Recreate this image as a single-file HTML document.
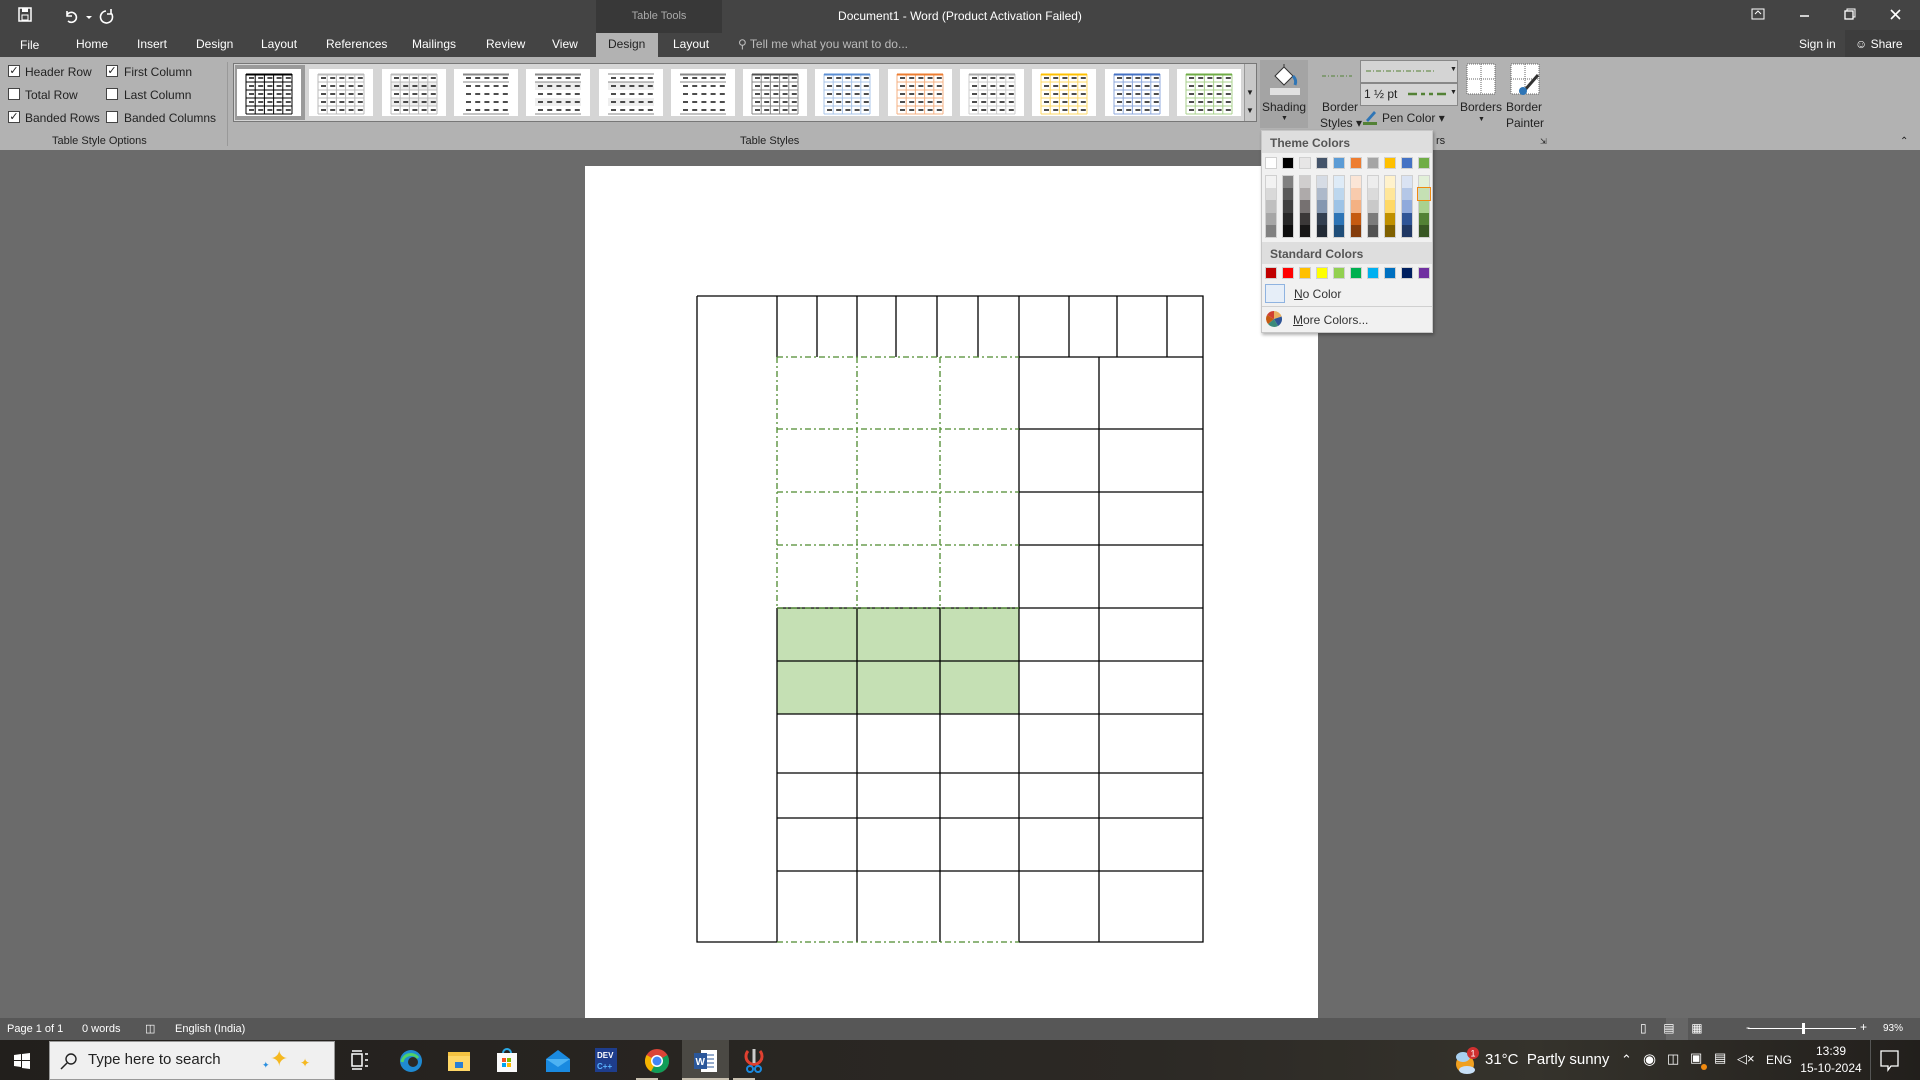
<!DOCTYPE html>
<html><head><meta charset="utf-8">
<style>
*{margin:0;padding:0;box-sizing:border-box}
body{width:1920px;height:1080px;overflow:hidden;position:relative;background:#6b6b6b;font-family:"Liberation Sans",sans-serif;font-size:12px;color:#222}
.a{position:absolute}
.w{color:#fff}
.t{position:absolute;white-space:nowrap}
.cb{position:absolute;width:12px;height:12px;border:1px solid #444;background:#fff;font-size:11px;line-height:10px;text-align:center;color:#222}
.sw{position:absolute;width:12px;height:12px;border:1px solid #d0d0d0}
</style></head><body>
<div class="a" style="left:0;top:0;width:1920px;height:57px;background:#444"></div>
<div class="a" style="left:596px;top:0;width:126px;height:33px;background:#383838"></div>
<div class="t" style="left:596px;top:10px;width:126px;text-align:center;color:#aaa;font-size:11px">Table Tools</div>
<div class="a" style="left:596px;top:33px;width:62px;height:24px;background:#b2b2b2"></div>
<div class="t w" style="left:760px;top:9px;width:400px;text-align:center;font-size:12px">Document1 - Word (Product Activation Failed)</div>
<svg class="a" style="left:18px;top:6px" width="150" height="20"><rect x="1" y="2" width="12" height="13" fill="none" stroke="#fff" stroke-width="1.5"/><rect x="4" y="2" width="6" height="4" fill="#fff"/><rect x="4" y="9" width="6" height="5" fill="none" stroke="#fff"/>
<path d="M49 9 a5 5 0 1 1 1 6 M49 5 v5 h5" fill="none" stroke="#fff" stroke-width="1.6"/><path d="M68 10 l3 3 l3-3z" fill="#fff"/>
<path d="M88 5 a6 6 0 1 0 5 2 M93 3 v5 h-4" fill="none" stroke="#fff" stroke-width="1.6"/><path d="M159 10 l3 3 l3-3z M159 7 h6" fill="#fff" stroke="#fff" transform="translate(-2,0)"/></svg>
<div class="t w" style="left:20px;top:38px">File</div>
<div class="t w" style="left:76px;top:37px">Home</div>
<div class="t w" style="left:137px;top:37px">Insert</div>
<div class="t w" style="left:196px;top:37px">Design</div>
<div class="t w" style="left:261px;top:37px">Layout</div>
<div class="t w" style="left:326px;top:37px">References</div>
<div class="t w" style="left:412px;top:37px">Mailings</div>
<div class="t w" style="left:486px;top:37px">Review</div>
<div class="t w" style="left:552px;top:37px">View</div>
<div class="t" style="left:608px;top:37px;color:#222">Design</div>
<div class="t w" style="left:673px;top:37px">Layout</div>
<div class="t" style="left:738px;top:37px;color:#bbb">&#9906; Tell me what you want to do...</div>
<div class="t w" style="left:1799px;top:37px">Sign in</div>
<div class="a" style="left:1845px;top:30px;width:75px;height:27px;background:#3d3d3d"></div>
<div class="t w" style="left:1855px;top:37px">&#9786; Share</div>
<svg class="a" style="left:1748px;top:6px" width="170" height="20"><rect x="4" y="3" width="12" height="10" fill="none" stroke="#fff"/><path d="M7 8 l3-3 l3 3" stroke="#fff" fill="none"/><path d="M52 10 h9" stroke="#fff" stroke-width="1.5"/><rect x="97" y="5" width="8" height="8" fill="none" stroke="#fff" stroke-width="1.3"/><path d="M99 5 v-2 h8 v8 h-2" stroke="#fff" fill="none"/><path d="M143 4 l9 9 M152 4 l-9 9" stroke="#fff" stroke-width="1.6"/></svg>

<div class="a" style="left:0;top:57px;width:1920px;height:93px;background:#b2b2b2"></div>
<div class="cb" style="left:8px;top:65px">&#10003;</div><div class="t" style="left:25px;top:65px">Header Row</div>
<div class="cb" style="left:8px;top:88px"></div><div class="t" style="left:25px;top:88px">Total Row</div>
<div class="cb" style="left:8px;top:111px">&#10003;</div><div class="t" style="left:25px;top:111px">Banded Rows</div>
<div class="cb" style="left:106px;top:65px">&#10003;</div><div class="t" style="left:124px;top:65px">First Column</div>
<div class="cb" style="left:106px;top:88px"></div><div class="t" style="left:124px;top:88px">Last Column</div>
<div class="cb" style="left:106px;top:111px"></div><div class="t" style="left:124px;top:111px">Banded Columns</div>
<div class="t" style="left:52px;top:135px;font-size:11px">Table Style Options</div>
<div class="a" style="left:227px;top:62px;width:1px;height:84px;background:#999"></div>
<div class="t" style="left:740px;top:135px;font-size:11px">Table Styles</div>
<div class="a" style="left:233px;top:63px;width:1024px;height:59px;background:#d5d5d5;border:1px solid #777"></div>
<div class="a" style="left:235px;top:65px;width:70px;height:55px;background:#9a9a9a"></div>
<div id="gal"></div>
<div class="a" style="left:1244px;top:64px;width:12px;height:57px;background:#c8c8c8;border-left:1px solid #999"></div>
<div class="t" style="left:1246px;top:88px;font-size:8px">&#9660;</div><div class="t" style="left:1246px;top:106px;font-size:8px">&#9660;</div>
<div class="a" style="left:1260px;top:60px;width:48px;height:68px;background:#a4a4a4"></div>
<svg class="a" style="left:1270px;top:62px" width="30" height="34"><path d="M5 14 l9-9 l9 9 l-9 9z" fill="#fff" stroke="#333"/><path d="M14 5 v-3" stroke="#333"/><path d="M23 14 q4 4 2 9" stroke="#2e75b6" stroke-width="3" fill="none"/><rect x="0" y="26" width="30" height="7" fill="#e0e0e0"/></svg>
<div class="t" style="left:1262px;top:100px">Shading</div><div class="t" style="left:1281px;top:115px;font-size:7px">&#9660;</div>
<svg class="a" style="left:1322px;top:74px" width="30" height="4"><path d="M0 2h30" stroke="#538135" stroke-dasharray="4 2 1 2"/></svg>
<div class="t" style="left:1322px;top:100px;text-align:center">Border</div><div class="t" style="left:1320px;top:116px">Styles &#9662;</div>
<div class="a" style="left:1360px;top:60px;width:98px;height:23px;background:#d4d4d4;border:1px solid #888"></div>
<svg class="a" style="left:1366px;top:69px" width="80" height="4"><path d="M0 2h70" stroke="#538135" stroke-dasharray="5 2 1 2"/></svg>
<div class="t" style="left:1450px;top:66px;font-size:7px">&#9660;</div>
<div class="a" style="left:1360px;top:83px;width:98px;height:23px;background:#d4d4d4;border:1px solid #888"></div>
<div class="t" style="left:1364px;top:87px">1 &#189; pt</div>
<svg class="a" style="left:1408px;top:92px" width="40" height="4"><path d="M0 2h40" stroke="#538135" stroke-width="2.5" stroke-dasharray="9 4 4 4 4 4"/></svg>
<div class="t" style="left:1450px;top:89px;font-size:7px">&#9660;</div>
<svg class="a" style="left:1363px;top:108px" width="16" height="18"><path d="M3 12 l8-9 2 2 -8 9z" fill="#2e75b6"/><rect x="0" y="14" width="14" height="3" fill="#538135"/></svg>
<div class="t" style="left:1382px;top:111px">Pen Color &#9662;</div>
<svg class="a" style="left:1466px;top:63px" width="30" height="32"><rect x="1" y="1" width="28" height="30" fill="#fff" stroke="#666" stroke-dasharray="1 1"/><path d="M15 1v30M1 16h28" stroke="#666" stroke-dasharray="1 1"/></svg>
<div class="t" style="left:1460px;top:100px">Borders</div><div class="t" style="left:1478px;top:116px;font-size:7px">&#9660;</div>
<svg class="a" style="left:1510px;top:63px" width="32" height="34"><rect x="1" y="1" width="28" height="30" fill="#fff" stroke="#666" stroke-dasharray="1 1"/><path d="M15 1v30M1 16h28" stroke="#666" stroke-dasharray="1 1"/><path d="M14 28 l14-16" stroke="#333" stroke-width="3"/><circle cx="13" cy="28" r="4" fill="#2e75b6"/></svg>
<div class="t" style="left:1506px;top:100px">Border</div><div class="t" style="left:1506px;top:116px">Painter</div>
<div class="t" style="left:1436px;top:135px;font-size:11px">rs</div>
<div class="t" style="left:1540px;top:137px;font-size:8px">&#8690;</div>
<div class="t" style="left:1900px;top:136px;font-size:10px">&#8963;</div>

<div class="a" style="left:585px;top:166px;width:733px;height:852px;background:#fff"></div>
<svg class="a" style="left:0;top:0" width="1920" height="1080">
<rect x="777" y="608" width="242" height="106" fill="#c5e0b4"/>
<g stroke="#000" stroke-width="1.3" fill="none">
<path d="M697 296H1203V942H1019M777 942H697V296"/>
<path d="M777 296V357M817 296V357M857 296V357M896 296V357M937 296V357M978 296V357M1019 296V357M1069 296V357M1117 296V357M1167 296V357"/>
<path d="M1019 357H1203M1099 357V942M1019 429H1203M1019 492H1203M1019 545H1203"/>
<path d="M777 608H1203M777 661H1203M777 714H1203M777 773H1203M777 818H1203M777 871H1203"/>
<path d="M777 608V942M857 608V942M940 608V942M1019 357V942"/>
</g>
<g stroke="#4e8a2f" stroke-width="1.3" fill="none" stroke-dasharray="6 3 2 3">
<path d="M777 357H1019M777 429H1019M777 492H1019M777 545H1019M777 608H1019M777 942H1019"/>
<path d="M777 357V608M857 357V608M940 357V608"/>
</g>
</svg>

<div class="a" style="left:1261px;top:130px;width:172px;height:203px;background:#f1f1f1;border:1px solid #c6c6c6;box-shadow:1px 2px 3px rgba(0,0,0,.3)"></div>
<div class="a" style="left:1262px;top:131px;width:170px;height:22px;background:#dedede"></div>
<div class="t" style="left:1270px;top:136px;font-weight:bold;color:#555">Theme Colors</div>
<div class="a" style="left:1262px;top:242px;width:170px;height:22px;background:#dedede"></div>
<div class="t" style="left:1270px;top:247px;font-weight:bold;color:#555">Standard Colors</div>
<div id="sw"></div>
<div class="a" style="left:1265px;top:284px;width:20px;height:19px;background:#e6eef8;border:1px solid #8fb3e0"></div>
<div class="t" style="left:1294px;top:287px;color:#333"><u>N</u>o Color</div>
<div class="a" style="left:1262px;top:306px;width:170px;height:1px;background:#d0d0d0"></div>
<svg class="a" style="left:1266px;top:311px" width="16" height="16"><path d="M8 8 L8 0 A8 8 0 0 1 15.6 5.5z" fill="#e8b060"/><path d="M8 8 L15.6 5.5 A8 8 0 0 1 12 15z" fill="#2f5597"/><path d="M8 8 L12 15 A8 8 0 0 1 2 13z" fill="#3b8a7a"/><path d="M8 8 L2 13 A8 8 0 0 1 1 4z" fill="#c55a11"/><path d="M8 8 L1 4 A8 8 0 0 1 8 0z" fill="#d04030"/></svg>
<div class="t" style="left:1293px;top:313px;color:#333"><u>M</u>ore Colors...</div>

<div class="a" style="left:0;top:1018px;width:1920px;height:22px;background:#575757"></div>
<div class="t w" style="left:7px;top:1023px;font-size:11px">Page 1 of 1</div>
<div class="t w" style="left:82px;top:1023px;font-size:11px">0 words</div>
<div class="t w" style="left:145px;top:1022px;font-size:11px">&#9707;</div>
<div class="t w" style="left:175px;top:1023px;font-size:11px">English (India)</div>
<div class="a" style="left:1666px;top:1018px;width:22px;height:22px;background:#666"></div>
<div class="t w" style="left:1640px;top:1021px;font-size:12px">&#9647;&nbsp;&nbsp;&nbsp;&nbsp;&nbsp;&#9636;&nbsp;&nbsp;&nbsp;&nbsp;&nbsp;&#9638;</div>
<div class="a" style="left:1748px;top:1028px;width:108px;height:1px;background:#fff"></div>
<div class="a" style="left:1802px;top:1023px;width:3px;height:11px;background:#fff"></div>
<div class="t w" style="left:1746px;top:1020px">-</div><div class="t w" style="left:1860px;top:1020px">+</div>
<div class="t w" style="left:1883px;top:1023px;font-size:10px">93%</div>

<div class="a" style="left:0;top:1040px;width:1920px;height:40px;background:linear-gradient(90deg,#221f1c,#2c2925 60%,#35332c 80%,#221f1c)"></div>
<svg class="a" style="left:14px;top:1053px" width="16" height="16"><path d="M0 2l7-1v6H0zM8 1l8-1v7H8zM0 8h7v6l-7-1zM8 8h8v8l-8-1z" fill="#fff"/></svg>
<div class="a" style="left:49px;top:1041px;width:286px;height:39px;background:#f0f0f0;border:1px solid #999"></div>
<svg class="a" style="left:60px;top:1052px" width="18" height="18"><circle cx="11" cy="7" r="5" fill="none" stroke="#222" stroke-width="1.4"/><path d="M7 11l-6 6" stroke="#222" stroke-width="1.5"/></svg>
<div class="t" style="left:88px;top:1051px;font-size:15px;color:#222">Type here to search</div>
<div class="t" style="left:270px;top:1046px;font-size:22px;color:#f5b820">&#10022;</div><div class="t" style="left:300px;top:1056px;font-size:12px;color:#f5b820">&#10022;</div><div class="t" style="left:262px;top:1060px;font-size:9px;color:#2a8fe0">&#10022;</div>
<svg class="a" style="left:350px;top:1050px" width="20" height="20"><rect x="2" y="4" width="10" height="12" fill="none" stroke="#fff" stroke-width="1.5"/><path d="M15 4h3M15 10h3M15 16h3M2 1h10M2 19h10" stroke="#fff" stroke-width="1.5"/></svg>
<svg class="a" style="left:398px;top:1048px" width="26" height="26"><circle cx="13" cy="13" r="11" fill="#1f8ad2"/><circle cx="15" cy="14" r="5" fill="#2b2925"/><path d="M4 14a9 9 0 0 1 16-4" stroke="#4fd06a" stroke-width="3" fill="none"/></svg>
<svg class="a" style="left:447px;top:1050px" width="24" height="22"><rect x="1" y="2" width="22" height="19" fill="#f5c342"/><rect x="1" y="6" width="22" height="15" fill="#ffd766"/><rect x="8" y="12" width="8" height="6" fill="#2a7fd4"/></svg>
<svg class="a" style="left:496px;top:1047px" width="22" height="26"><path d="M7 6a4 4 0 0 1 8 0" stroke="#29a9e6" stroke-width="2" fill="none"/><rect x="1" y="6" width="20" height="19" fill="#fafafa"/><rect x="6" y="11" width="4" height="4" fill="#f25022"/><rect x="11" y="11" width="4" height="4" fill="#7fba00"/><rect x="6" y="16" width="4" height="4" fill="#00a4ef"/><rect x="11" y="16" width="4" height="4" fill="#ffb900"/></svg>
<svg class="a" style="left:545px;top:1049px" width="26" height="24"><path d="M1 10l12-9 12 9v13H1z" fill="#1a8ae0"/><path d="M1 10l12 8 12-8" fill="#4db2f3"/></svg>
<svg class="a" style="left:594px;top:1047px" width="24" height="26"><rect x="1" y="1" width="22" height="24" fill="#1e3d8c"/><text x="3" y="11" font-size="8" fill="#fff" font-family="Liberation Sans" font-weight="bold">DEV</text><text x="3" y="22" font-size="8" fill="#5ab4ff" font-family="Liberation Sans" font-weight="bold">C++</text></svg>
<svg class="a" style="left:644px;top:1048px" width="26" height="26"><circle cx="13" cy="13" r="12" fill="#db4437"/><path d="M13 13 L23.4 7 A12 12 0 0 1 7 23.4z" fill="#0f9d58"/><path d="M13 13 L7 23.4 A12 12 0 0 1 2.6 7z" fill="#f4b400"/><circle cx="13" cy="13" r="6" fill="#fff"/><circle cx="13" cy="13" r="4.5" fill="#4285f4"/></svg>
<div class="a" style="left:682px;top:1040px;width:47px;height:40px;background:#4b4944"></div>
<div class="a" style="left:682px;top:1078px;width:47px;height:2px;background:#c8c0b0"></div>
<svg class="a" style="left:693px;top:1048px" width="26" height="26"><rect x="8" y="2" width="16" height="22" fill="#fff"/><path d="M12 7h9M12 11h9M12 15h9M12 19h9" stroke="#2b579a"/><rect x="1" y="5" width="13" height="16" fill="#2b579a"/><text x="2.5" y="17" font-size="10" fill="#fff" font-family="Liberation Sans" font-weight="bold">W</text></svg>
<svg class="a" style="left:742px;top:1047px" width="24" height="28"><path d="M6 4 a8 8 0 1 0 12 0" stroke="#e04030" stroke-width="3" fill="none"/><path d="M12 2v14" stroke="#ccc" stroke-width="3"/><circle cx="8" cy="22" r="3" stroke="#1a8ae0" fill="none" stroke-width="2"/><circle cx="16" cy="22" r="3" stroke="#1a8ae0" fill="none" stroke-width="2"/></svg>
<div class="a" style="left:636px;top:1078px;width:22px;height:2px;background:#c8c0b0"></div>
<div class="a" style="left:733px;top:1078px;width:22px;height:2px;background:#c8c0b0"></div>
<svg class="a" style="left:1453px;top:1046px" width="28" height="30"><circle cx="12" cy="18" r="9" fill="#f0a020"/><ellipse cx="10" cy="11" rx="7" ry="5" fill="#a8d0f0"/><ellipse cx="14" cy="24" rx="8" ry="4" fill="#c8e0f8"/><circle cx="20" cy="7" r="6" fill="#d03030"/><text x="17.5" y="10.5" font-size="9" fill="#fff" font-family="Liberation Sans">1</text></svg>
<div class="t w" style="left:1485px;top:1051px;font-size:15px">31°C&nbsp; Partly sunny</div>
<div class="t w" style="left:1621px;top:1052px;font-size:13px">&#8963;</div>
<div class="t w" style="left:1643px;top:1050px;font-size:15px">&#9673;</div>
<div class="t w" style="left:1667px;top:1051px;font-size:13px">&#9707;</div>
<div class="t w" style="left:1690px;top:1050px;font-size:13px">&#9635;</div>
<div class="a" style="left:1701px;top:1064px;width:6px;height:6px;border-radius:3px;background:#f08a10"></div>
<div class="t w" style="left:1714px;top:1050px;font-size:13px">&#9636;</div>
<div class="t w" style="left:1737px;top:1051px;font-size:13px">&#9665;×</div>
<div class="t w" style="left:1766px;top:1053px;font-size:12px">ENG</div>
<div class="t w" style="left:1800px;top:1044px;font-size:12px;text-align:center;width:62px">13:39<br><span style="line-height:20px">15-10-2024</span></div>
<div class="a" style="left:1870px;top:1040px;width:1px;height:40px;background:#555"></div>
<svg class="a" style="left:1880px;top:1050px" width="20" height="22"><path d="M1 1h17v15H11l-3 4v-4H1z" fill="none" stroke="#fff" stroke-width="1.3"/></svg>

<script>
(function(){
var g=document.getElementById('gal'),h='';
var st=[['#000','#000',''],['#bbb','#bbb',''],['#bbb','#bbb','#eee'],['','#888',''],['','#888','#eee'],['','','#eee'],['','#888',''],['#888','#555',''],['#a9c4e8','#5b8fd4',''],['#f4b183','#ed7d31',''],['#ccc','#aaa',''],['#ffd966','#ffc000',''],['#8faadc','#4472c4',''],['#a9d18e','#70ad47','']];
for(var i=0;i<14;i++){var x=237+i*72.3;
var s='<svg class="a" style="left:'+x+'px;top:69px" width="64" height="47"><rect width="64" height="47" fill="#fff"/>';
var c=st[i];
for(var r=0;r<5;r++){var y=5+r*8;if(c[2]&&r%2==1)s+='<rect x="9" y="'+y+'" width="46" height="8" fill="'+c[2]+'"/>';}
if(c[0]){for(var k=0;k<=5;k++){s+='<path d="M'+(9+k*9.2)+' 5V45" stroke="'+c[0]+'"/>';}for(var r=0;r<=5;r++)s+='<path d="M9 '+(5+r*8)+'H55" stroke="'+c[0]+'"/>';}
else{s+='<path d="M9 5H55M9 13H55M9 45H55" stroke="'+(c[1]||'#888')+'"/>';}
if(c[1])s+='<path d="M9 5.5H55" stroke="'+c[1]+'" stroke-width="2"/>';
for(var r=0;r<5;r++)for(var k=0;k<5;k++)s+='<path d="M'+(12+k*9.2)+' '+(9+r*8)+'h5" stroke="#000" stroke-width="1.4"/>';
s+='</svg>';h+=s;}
g.innerHTML=h;
var tc=['FFFFFF','000000','E7E6E6','44546A','5B9BD5','ED7D31','A5A5A5','FFC000','4472C4','70AD47'];
var sh=[['F2F2F2','D9D9D9','BFBFBF','A6A6A6','808080'],['808080','595959','404040','262626','0D0D0D'],['D0CECE','AEAAAA','767171','3B3838','171616'],['D6DCE5','ADB9CA','8497B0','333F50','222A35'],['DEEBF7','BDD7EE','9DC3E6','2E75B6','1F4E79'],['FBE5D6','F8CBAD','F4B183','C55A11','843C0C'],['EDEDED','DBDBDB','C9C9C9','7B7B7B','525252'],['FFF2CC','FFE699','FFD966','BF9000','7F6000'],['DAE3F3','B4C7E7','8FAADC','2F5597','203864'],['E2F0D9','C5E0B4','A9D18E','538135','385723']];
var stc=['C00000','FF0000','FFC000','FFFF00','92D050','00B050','00B0F0','0070C0','002060','7030A0'];
var o='';
for(var i=0;i<10;i++){var x=1265+i*17;
o+='<div class="sw" style="left:'+x+'px;top:157px;background:#'+tc[i]+'"></div>';
o+='<div class="a" style="left:'+x+'px;top:175px;width:12px;height:63px;border:1px solid #d0d0d0"></div>';
for(var r=0;r<5;r++)o+='<div class="a" style="left:'+(x+1)+'px;top:'+(176+r*12.2)+'px;width:10px;height:12.2px;background:#'+sh[i][r]+'"></div>';
o+='<div class="sw" style="left:'+x+'px;top:267px;background:#'+stc[i]+'"></div>';}
o+='<div class="a" style="left:1417px;top:187px;width:14px;height:14px;border:1.5px solid #f08a10"></div>';
document.getElementById('sw').innerHTML=o;
})();
</script>
</body></html>
